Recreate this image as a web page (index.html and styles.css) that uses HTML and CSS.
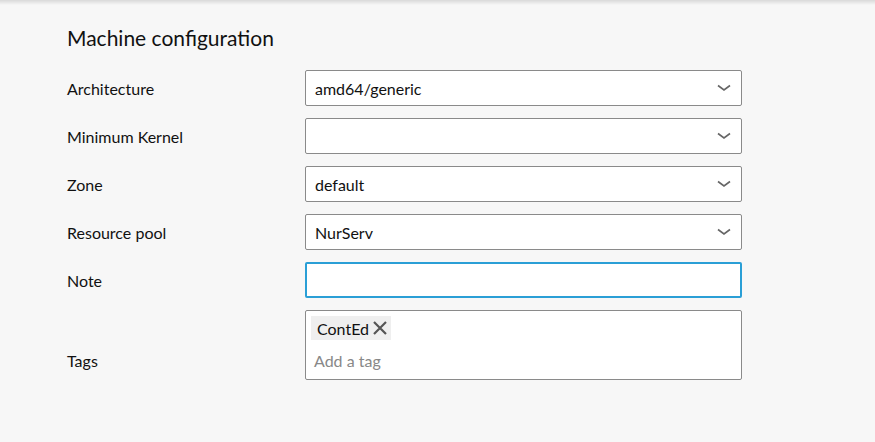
FILE: index.html
```html
<!DOCTYPE html>
<html>
<head>
<meta charset="utf-8">
<link rel="stylesheet" href="styles.css">
</head>
<body>
<div class="topshadow"></div>
<main class="panel">
  <h2 class="title">Machine configuration</h2>
  <div class="form">
    <div class="row">
      <label class="label">Architecture</label>
      <div class="field select"><span class="value">amd64/generic</span><svg class="chev" width="14" height="8" viewBox="0 0 14 8"><path d="M1 1.5 L7 6 L13 1.5" fill="none" stroke="#666" stroke-width="1.6"/></svg></div>
    </div>
    <div class="row">
      <label class="label">Minimum Kernel</label>
      <div class="field select"><span class="value"></span><svg class="chev" width="14" height="8" viewBox="0 0 14 8"><path d="M1 1.5 L7 6 L13 1.5" fill="none" stroke="#666" stroke-width="1.6"/></svg></div>
    </div>
    <div class="row">
      <label class="label">Zone</label>
      <div class="field select"><span class="value">default</span><svg class="chev" width="14" height="8" viewBox="0 0 14 8"><path d="M1 1.5 L7 6 L13 1.5" fill="none" stroke="#666" stroke-width="1.6"/></svg></div>
    </div>
    <div class="row">
      <label class="label">Resource pool</label>
      <div class="field select"><span class="value">NurServ</span><svg class="chev" width="14" height="8" viewBox="0 0 14 8"><path d="M1 1.5 L7 6 L13 1.5" fill="none" stroke="#666" stroke-width="1.6"/></svg></div>
    </div>
    <div class="row">
      <label class="label">Note</label>
      <div class="field focus"></div>
    </div>
    <div class="row tagsrow">
      <label class="label">Tags</label>
      <div class="field tags">
        <div class="chips"><span class="chip">ContEd<svg class="x" width="16" height="16" viewBox="0 0 16 16"><path d="M2 2 L14 14 M14 2 L2 14" stroke="#555" stroke-width="2.2"/></svg></span></div>
        <div class="placeholder">Add a tag</div>
      </div>
    </div>
  </div>
</main>
</body>
</html>
```
FILE: styles.css
```css
html, body {
  margin: 0;
  padding: 0;
  background: #f7f7f7;
}
body {
  font-family: "Lato", "Noto Sans", sans-serif;
  color: #111;
  position: relative;
  height: 442px;
  overflow: hidden;
}
.topshadow {
  position: absolute;
  left: 0; right: 0; top: 0;
  height: 5px;
  background: linear-gradient(#d9d9d9, rgba(247,247,247,0));
}
.panel {
  padding: 24px 0 0 67px;
}
.title {
  margin: 0 0 18px 0;
  font-weight: 400;
  font-size: 21px;
  line-height: 28px;
  color: #111;
}
.form {
  display: flex;
  flex-direction: column;
  gap: 12px;
  width: 675px;
}
.row {
  display: flex;
  align-items: center;
}
.label {
  width: 238px;
  font-size: 16px;
  color: #111;
}
.field {
  box-sizing: border-box;
  width: 437px;
  height: 36px;
  background: #fff;
  border: 1px solid #8a8a8a;
  border-radius: 2px;
}
.select {
  display: flex;
  align-items: center;
  justify-content: space-between;
  padding: 0 10px 0 9px;
  font-size: 16px;
  color: #111;
}
.chev { display: block; }
.focus {
  border: 2px solid #2a9fd6;
  border-radius: 2px;
}
.tagsrow {
  align-items: flex-end;
}
.tagsrow .label {
  padding-bottom: 10px;
}
.tags {
  height: 70px;
  padding: 5px 5px 0 5px;
}
.chip {
  display: inline-flex;
  align-items: center;
  gap: 3px;
  height: 24px;
  padding: 0 3px 0 6px;
  background: #efefef;
  font-size: 16px;
  color: #111;
}
.x { display: block; }
.placeholder {
  margin-top: 11px;
  padding-left: 3px;
  font-size: 16px;
  color: #888;
}
```
